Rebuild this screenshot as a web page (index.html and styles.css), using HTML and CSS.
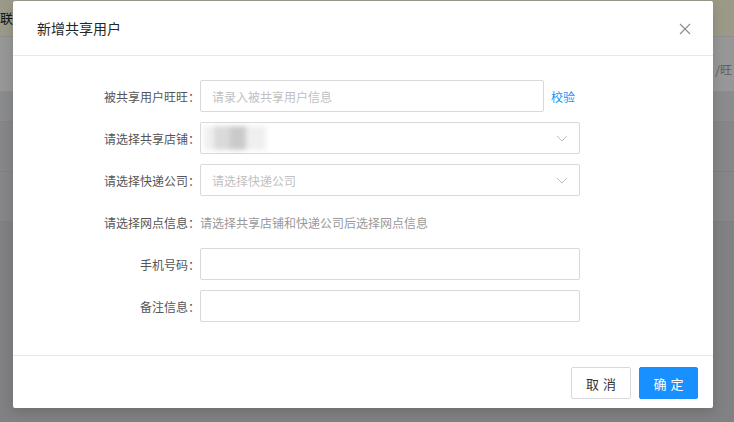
FILE: index.html
```html
<!DOCTYPE html>
<html lang="zh-CN">

<head>
    <meta charset="UTF-8">
    <meta name="viewport" content="width=device-width, initial-scale=1.0">
    <title>新增共享用户</title>
    <link rel="stylesheet" href="styles.css">
</head>

<body>
    <!-- Página por trás do modal -->
    <div class="page">
        <div class="notice">联</div>
        <div class="toolbar">
            <span class="search">/旺</span>
        </div>
        <div class="table">
            <div class="table-head"></div>
            <div class="table-row"></div>
            <div class="table-row"></div>
        </div>
    </div>
    <div class="mask"></div>

    <!-- Modal -->
    <div class="modal">
        <div class="modal-header">
            <span class="modal-title">新增共享用户</span>
            <span class="modal-close">
                <svg width="12" height="12" viewBox="0 0 12 12">
                    <path d="M1 1L11 11M11 1L1 11" stroke="#8c8c8c" stroke-width="1.1" fill="none" />
                </svg>
            </span>
        </div>

        <div class="modal-body">
            <div class="form-row">
                <label class="form-label">被共享用户旺旺：</label>
                <div class="form-control">
                    <input type="text" class="input input-short" placeholder="请录入被共享用户信息">
                    <a class="link">校验</a>
                </div>
            </div>
            <div class="form-row">
                <label class="form-label">请选择共享店铺：</label>
                <div class="form-control">
                    <div class="select">
                        <span class="blurred"></span>
                        <svg class="arrow" width="12" height="7" viewBox="0 0 12 7">
                            <path d="M1 1L6 6L11 1" stroke="#bfbfbf" stroke-width="1" fill="none" />
                        </svg>
                    </div>
                </div>
            </div>
            <div class="form-row">
                <label class="form-label">请选择快递公司：</label>
                <div class="form-control">
                    <div class="select">
                        <span class="placeholder">请选择快递公司</span>
                        <svg class="arrow" width="12" height="7" viewBox="0 0 12 7">
                            <path d="M1 1L6 6L11 1" stroke="#bfbfbf" stroke-width="1" fill="none" />
                        </svg>
                    </div>
                </div>
            </div>
            <div class="form-row">
                <label class="form-label">请选择网点信息：</label>
                <div class="form-control">
                    <span class="hint">请选择共享店铺和快递公司后选择网点信息</span>
                </div>
            </div>
            <div class="form-row">
                <label class="form-label">手机号码：</label>
                <div class="form-control">
                    <input type="text" class="input">
                </div>
            </div>
            <div class="form-row">
                <label class="form-label">备注信息：</label>
                <div class="form-control">
                    <input type="text" class="input">
                </div>
            </div>
        </div>

        <div class="modal-footer">
            <button class="btn">取消</button>
            <button class="btn btn-primary">确定</button>
        </div>
    </div>
</body>

</html>
```

FILE: styles.css
```css
/* Reset */
* {
    margin: 0;
    padding: 0;
    box-sizing: border-box;
    font-family: "Noto Sans CJK SC", "Liberation Sans", sans-serif;
}

body {
    width: 734px;
    height: 422px;
    overflow: hidden;
    position: relative;
    background-color: #cfd0d3;
}

/* Página de fundo */
.page {
    height: 100%;
}

.notice {
    height: 36px;
    background-color: #fbf8dc;
    color: #222;
    font-size: 13px;
    line-height: 36px;
    padding-left: 0;
}

.toolbar {
    height: 56px;
    background-color: #f4f4f4;
    border-top: 1px solid #e6e6e6;
    border-bottom: 1px solid #e0e0e0;
    display: flex;
    justify-content: flex-end;
    align-items: center;
    padding-right: 2px;
}

.search {
    font-size: 12px;
    color: #999;
    margin-top: 10px;
}

.table-head {
    height: 30px;
    background-color: #dfe0e2;
    border-bottom: 1px solid #d6d6d6;
}

.table-row {
    height: 50px;
    background-color: #d8d9dc;
    border-bottom: 1px solid #cdced1;
}

.mask {
    position: absolute;
    inset: 0;
    background-color: rgba(0, 0, 0, 0.38);
}

/* Modal */
.modal {
    position: absolute;
    left: 13px;
    top: 1px;
    width: 700px;
    background-color: #fff;
    border-radius: 2px;
    box-shadow: 0 4px 12px rgba(0, 0, 0, 0.15);
}

.modal-header {
    height: 55px;
    padding: 0 24px;
    display: flex;
    align-items: center;
    justify-content: space-between;
    border-bottom: 1px solid #e8e8e8;
}

.modal-title {
    font-size: 14px;
    color: #262626;
}

.modal-close {
    display: flex;
    margin-right: -2px;
    margin-top: 1px;
}

.modal-body {
    padding: 24px 0 33px;
    display: flex;
    flex-direction: column;
    gap: 10px;
}

.form-row {
    display: flex;
    align-items: center;
    height: 32px;
}

.form-label {
    width: 187px;
    text-align: right;
    font-size: 12px;
    color: #555;
    white-space: nowrap;
}

.form-control {
    display: flex;
    align-items: center;
    gap: 7px;
}

.input {
    width: 380px;
    height: 32px;
    border: 1px solid #d9d9d9;
    border-radius: 2px;
    padding: 0 11px;
    font-size: 12px;
    color: #333;
    outline: none;
}

.input-short {
    width: 344px;
}

.input::placeholder {
    color: #bfbfbf;
}

.link {
    font-size: 12px;
    color: #1890ff;
    cursor: pointer;
}

.select {
    width: 380px;
    height: 32px;
    border: 1px solid #d9d9d9;
    border-radius: 2px;
    padding: 0 11px;
    display: flex;
    align-items: center;
    justify-content: space-between;
}

.select .placeholder {
    font-size: 12px;
    color: #bfbfbf;
}

/* Valor borrado da loja */
.blurred {
    display: block;
    width: 62px;
    height: 24px;
    margin-left: -8px;
    background: linear-gradient(to right, #f0f0f0 0 10px, #dadada 10px 26px, #cacaca 26px 42px, #efefef 42px);
    filter: blur(2.5px);
}

.hint {
    font-size: 12px;
    color: #999;
}

/* Rodapé */
.modal-footer {
    border-top: 1px solid #e8e8e8;
    padding: 11px 15px 9px;
    display: flex;
    justify-content: flex-end;
    gap: 8px;
}

.btn {
    height: 32px;
    width: 60px;
    border: 1px solid #d9d9d9;
    border-radius: 2px;
    background-color: #fff;
    color: #333;
    font-size: 13px;
    letter-spacing: 4px;
    padding-left: 4px;
    cursor: pointer;
}

.btn-primary {
    width: 59px;
    background-color: #1890ff;
    border-color: #1890ff;
    color: #fff;
}
```
